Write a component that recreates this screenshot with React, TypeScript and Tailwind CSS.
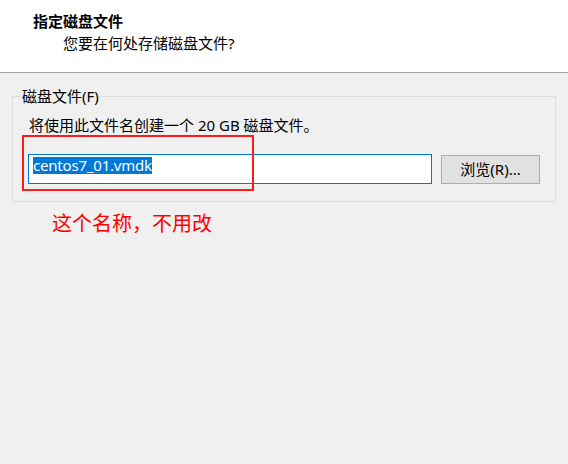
export default function App() {
  const ui = { fontFamily: '"Noto Sans", "Noto Sans CJK SC", sans-serif' };
  return (
    <div className="w-[568px] h-[464px] bg-[#f0f0f0] text-black overflow-hidden" style={ui}>
      <header className="h-[73px] bg-white border-b border-[#a0a0a0] pt-[11px]">
        <h1 className="pl-[33px] text-[15px] leading-[20px] font-bold">指定磁盘文件</h1>
        <p className="pl-[63px] mt-[2px] text-[15px] leading-[20px]">您要在何处存储磁盘文件?</p>
      </header>

      <div className="px-3 pt-[13px]">
        <fieldset className="border border-[#dcdcdc] px-[15px] pb-[17px]">
          <legend className="-ml-[7px] px-px text-[15px] leading-[20px]">磁盘文件(F)</legend>
          <p className="mt-[9px] ml-px text-[15px] leading-[20px]">将使用此文件名创建一个 20 GB 磁盘文件。</p>
          <div className="relative mt-[19px] flex items-center gap-[9px]">
            <div className="w-[404px] h-[30px] bg-white border border-[#0078d7] pl-[4px] pt-[2px] flex items-start">
              <span className="bg-[#0078d7] text-white text-[15px] leading-[17px] tracking-[-0.2px]">centos7_01.vmdk</span>
            </div>
            <button className="w-[99px] h-[29px] bg-[#e1e1e1] border border-[#adadad] text-[15px] leading-[20px]">
              浏览(R)...
            </button>
            {/* red annotation frame */}
            <div className="absolute left-[-6px] top-[-19px] w-[232px] h-[56px] border-2 border-[#ff1a1a] pointer-events-none" />
          </div>
        </fieldset>

        <p className="ml-[40px] mt-[10px] text-[20px] leading-[24px] text-[#ff0000]">这个名称，不用改</p>
      </div>
    </div>
  );
}
